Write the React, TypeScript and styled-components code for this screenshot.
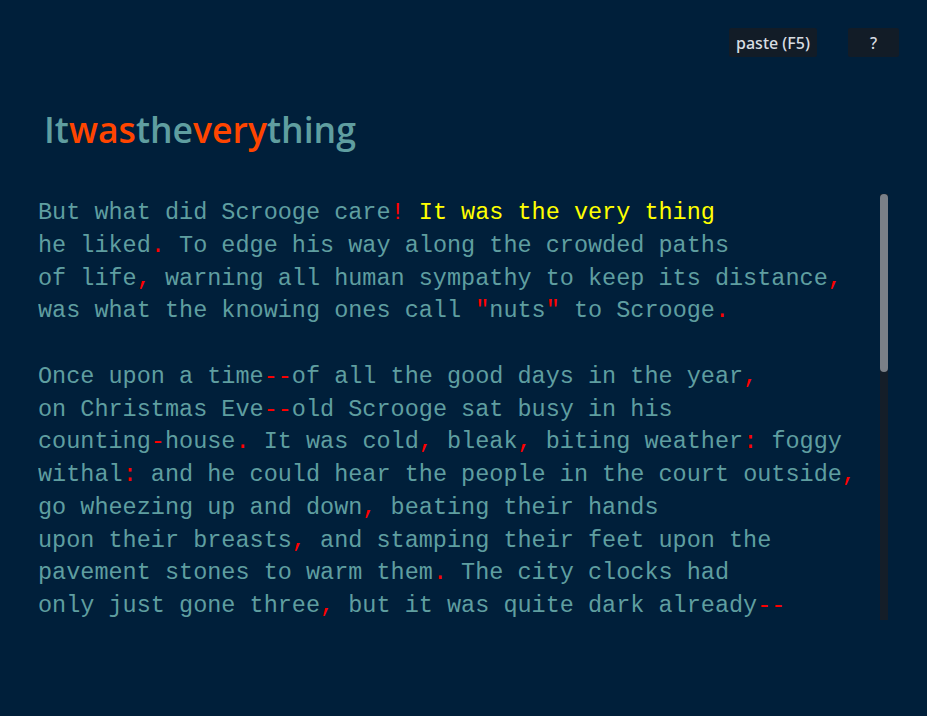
import React from "react";
import styled, { createGlobalStyle } from "styled-components";

const GlobalStyle = createGlobalStyle`
  html, body {
    margin: 0;
    padding: 0;
    background: #001f3a;
  }
  body {
    font-family: "Noto Sans", "Open Sans", sans-serif;
  }
`;

const Page = styled.div`
  width: 100%;
  height: 716px;
  background: #001f3a;
  display: flex;
  flex-direction: column;
  box-sizing: border-box;
  padding: 28px 28px 0 38px;
`;

const Toolbar = styled.div`
  display: flex;
  justify-content: flex-end;
  gap: 31px;
`;

const ToolButton = styled.button<{ $w: number }>`
  width: ${(p) => p.$w}px;
  height: 29px;
  border: none;
  border-radius: 2px;
  background: #121c27;
  color: #d8dde2;
  font-family: "Noto Sans", "Open Sans", sans-serif;
  font-size: 16px;
  font-weight: 500;
  padding: 0;
  cursor: pointer;
`;

const Title = styled.h1`
  margin: 47px 0 0 6px;
  font-family: "Open Sans", "Noto Sans", sans-serif;
  font-weight: 600;
  font-size: 35.6px;
  line-height: 50px;
  color: #5f9ea0;
`;

const Hit = styled.span`
  color: #ff4500;
`;

const Reader = styled.div`
  margin-top: 40px;
  display: flex;
  width: 850px;
  height: 426px;
`;

const TextBox = styled.div`
  flex: 1;
  overflow: hidden;
  padding-top: 3px;
  white-space: pre;
  font-family: "Liberation Mono", "DejaVu Sans Mono", monospace;
  font-size: 23.5px;
  line-height: 32.75px;
  color: #5f9ea0;
`;

const ScrollTrack = styled.div`
  width: 8px;
  background: #141e29;
  display: flex;
  flex-direction: column;
`;

const ScrollThumb = styled.div`
  height: 178px;
  background: #7a8088;
  border-radius: 4px;
`;

const Punct = styled.span`
  color: #ff0000;
`;

const Current = styled.span`
  color: #ffff00;
`;

const PUNCT = /[!.,"':;\-?]/;

function Colored({ text }: { text: string }) {
  const parts: React.ReactNode[] = [];
  let buf = "";
  let key = 0;
  for (const ch of text) {
    if (PUNCT.test(ch)) {
      if (buf) parts.push(buf);
      buf = "";
      parts.push(<Punct key={key++}>{ch}</Punct>);
    } else {
      buf += ch;
    }
  }
  if (buf) parts.push(buf);
  return <>{parts}</>;
}

const before = "But what did Scrooge care! ";
const current = "It was the very thing";
const after = `
he liked. To edge his way along the crowded paths
of life, warning all human sympathy to keep its distance,
was what the knowing ones call "nuts" to Scrooge.

Once upon a time--of all the good days in the year,
on Christmas Eve--old Scrooge sat busy in his
counting-house. It was cold, bleak, biting weather: foggy
withal: and he could hear the people in the court outside,
go wheezing up and down, beating their hands
upon their breasts, and stamping their feet upon the
pavement stones to warm them. The city clocks had
only just gone three, but it was quite dark already--
it had not been light all day--and candles were
flaring in the windows of the neighbouring offices,
like ruddy smears upon the palpable brown air.`;

export default function App() {
  return (
    <>
      <GlobalStyle />
      <Page>
        <Toolbar>
          <ToolButton $w={88}>paste (F5)</ToolButton>
          <ToolButton $w={51}>?</ToolButton>
        </Toolbar>
        <Title>
          It<Hit>was</Hit>the<Hit>very</Hit>thing
        </Title>
        <Reader>
          <TextBox>
            <Colored text={before} />
            <Current>{current}</Current>
            <Colored text={after} />
          </TextBox>
          <ScrollTrack>
            <ScrollThumb />
          </ScrollTrack>
        </Reader>
      </Page>
    </>
  );
}
